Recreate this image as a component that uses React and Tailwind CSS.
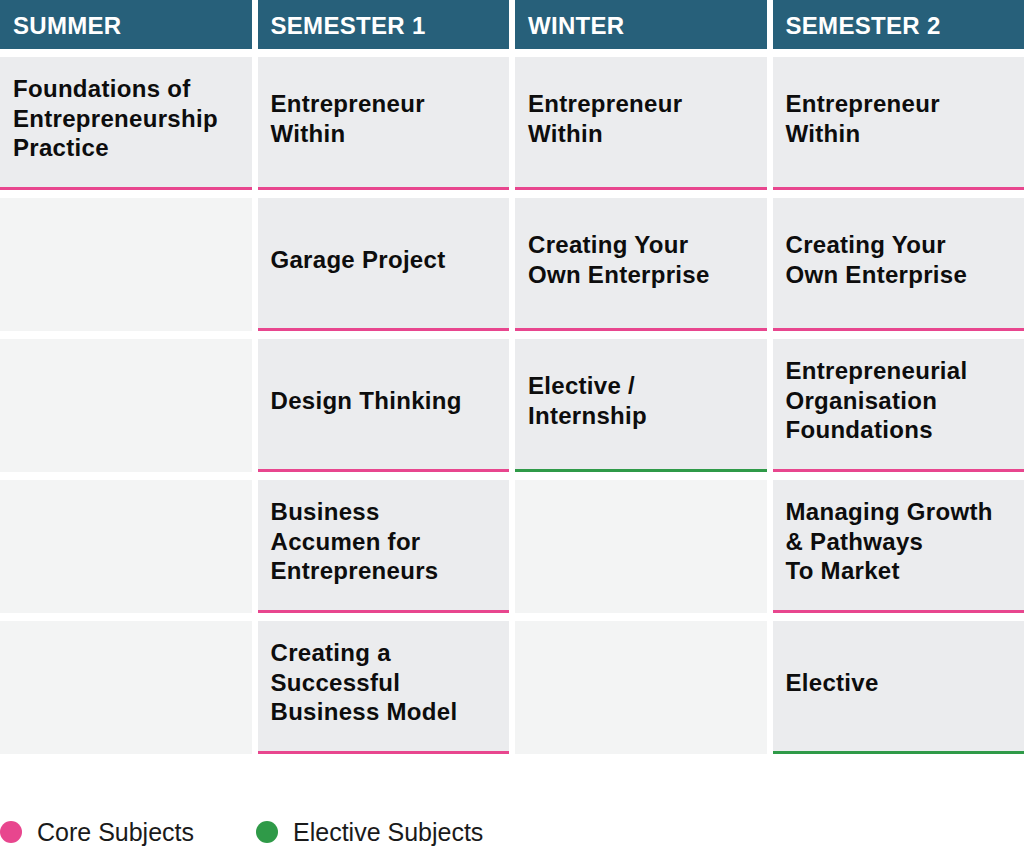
const headers = ["SUMMER", "SEMESTER 1", "WINTER", "SEMESTER 2"];

// each row: [summer, sem1, winter, sem2]; null = empty slot
// kind: "core" (pink bar) | "elective" (green bar)
const rows = [
  [
    { lines: ["Foundations of", "Entrepreneurship", "Practice"], kind: "core" },
    { lines: ["Entrepreneur", "Within"], kind: "core" },
    { lines: ["Entrepreneur", "Within"], kind: "core" },
    { lines: ["Entrepreneur", "Within"], kind: "core" },
  ],
  [
    null,
    { lines: ["Garage Project"], kind: "core" },
    { lines: ["Creating Your", "Own Enterprise"], kind: "core" },
    { lines: ["Creating Your", "Own Enterprise"], kind: "core" },
  ],
  [
    null,
    { lines: ["Design Thinking"], kind: "core" },
    { lines: ["Elective /", "Internship"], kind: "elective" },
    { lines: ["Entrepreneurial", "Organisation", "Foundations"], kind: "core" },
  ],
  [
    null,
    { lines: ["Business", "Accumen for", "Entrepreneurs"], kind: "core" },
    null,
    { lines: ["Managing Growth", "& Pathways", "To Market"], kind: "core" },
  ],
  [
    null,
    { lines: ["Creating a", "Successful", "Business Model"], kind: "core" },
    null,
    { lines: ["Elective"], kind: "elective" },
  ],
];

function Cell({ item }) {
  if (!item) {
    return <div className="h-[133px] bg-[#f3f4f4]" />;
  }

  return (
    <div
      className={
        "h-[133px] bg-[#ebecee] border-b-[3px] flex items-center pl-[13px] pb-[7px] " +
        (item.kind === "core" ? "border-[#e8468e]" : "border-[#2f9a48]")
      }
    >
      <p className="text-[24px] leading-[29.5px] tracking-[0.3px] font-bold text-[#0d0d0d]">
        {item.lines.map((line) => (
          <span key={line} className="block whitespace-nowrap">
            {line}
          </span>
        ))}
      </p>
    </div>
  );
}

export default function App() {
  return (
    <div className="w-[1024px] h-[848px] bg-white font-['Liberation_Sans',Arial,sans-serif] flex flex-col">
      {/* Timetable */}
      <div className="grid grid-cols-4 gap-x-[6px] gap-y-[8px]">
        {headers.map((h) => (
          <div
            key={h}
            className="h-[49px] bg-[#27607a] flex items-center pl-[13px] pt-[2px]"
          >
            <span className="text-[24px] font-bold tracking-[0.3px] text-white leading-none">
              {h}
            </span>
          </div>
        ))}

        {rows.map((row, r) =>
          row.map((item, c) => <Cell key={r + "-" + c} item={item} />)
        )}
      </div>

      {/* Legend */}
      <div className="flex mt-[67px]">
        <div className="w-[256px] flex items-center gap-[15px]">
          <span className="w-[22px] h-[22px] rounded-full bg-[#e8468e]" />
          <span className="text-[25px] leading-[22px] text-[#1a1a1a]">Core Subjects</span>
        </div>
        <div className="flex items-center gap-[15px]">
          <span className="w-[22px] h-[22px] rounded-full bg-[#2f9a48]" />
          <span className="text-[25px] leading-[22px] text-[#1a1a1a]">Elective Subjects</span>
        </div>
      </div>
    </div>
  );
}
